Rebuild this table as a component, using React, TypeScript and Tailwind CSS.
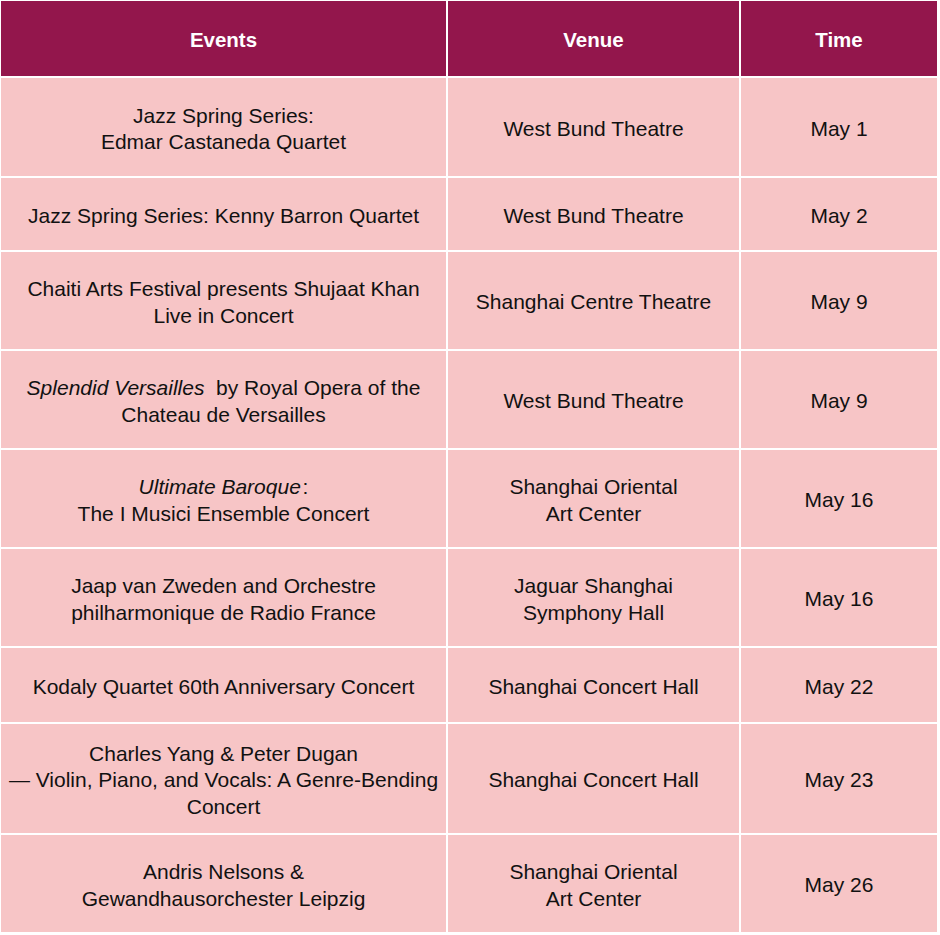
import React from "react";

type Row = { ev: React.ReactNode; venue: React.ReactNode; time: string; h: string };

const rows: Row[] = [
  { ev: <>Jazz Spring Series:<br />Edmar Castaneda Quartet</>, venue: "West Bund Theatre", time: "May 1", h: "h-[98px]" },
  { ev: <>Jazz Spring Series: Kenny Barron Quartet</>, venue: "West Bund Theatre", time: "May 2", h: "h-[72px]" },
  { ev: <>Chaiti Arts Festival presents Shujaat Khan<br />Live in Concert</>, venue: "Shanghai Centre Theatre", time: "May 9", h: "h-[97px]" },
  { ev: <><i>Splendid Versailles</i>&nbsp; by Royal Opera of the<br />Chateau de Versailles</>, venue: "West Bund Theatre", time: "May 9", h: "h-[97px]" },
  { ev: <><i>Ultimate Baroque</i>&#8202;:<br />The I Musici Ensemble Concert</>, venue: <>Shanghai Oriental<br />Art Center</>, time: "May 16", h: "h-[97px]" },
  { ev: <>Jaap van Zweden and Orchestre<br />philharmonique de Radio France</>, venue: <>Jaguar Shanghai<br />Symphony Hall</>, time: "May 16", h: "h-[97px]" },
  { ev: <>Kodaly Quartet 60th Anniversary Concert</>, venue: "Shanghai Concert Hall", time: "May 22", h: "h-[74px]" },
  { ev: <>Charles Yang &amp; Peter Dugan<br />— Violin, Piano, and Vocals: A Genre-Bending<br />Concert</>, venue: "Shanghai Concert Hall", time: "May 23", h: "h-[109px]" },
  { ev: <>Andris Nelsons &amp;<br />Gewandhausorchester Leipzig</>, venue: <>Shanghai Oriental<br />Art Center</>, time: "May 26", h: "h-[97px]" },
];

const cell = "flex items-center justify-center text-center bg-[#f7c5c6] text-[#111111] text-[21px] leading-[26.5px] pt-[4px]";
const head = "flex items-center justify-center text-center bg-[#93164c] text-white font-bold text-[20.5px] h-[75px] pt-[4px]";

export default function App() {
  return (
    <div className="w-[940px] h-[935px] bg-white pt-px pl-px" style={{ fontFamily: '"Liberation Sans", Arial, sans-serif' }}>
      <div className="grid grid-cols-[445px_291px_196px] gap-[2px]">
        <div className={head}>Events</div>
        <div className={head}>Venue</div>
        <div className={head}>Time</div>
        {rows.map((r, i) => (
          <React.Fragment key={i}>
            <div className={`${cell} ${r.h}`}>
              <div>{r.ev}</div>
            </div>
            <div className={`${cell} ${r.h}`}>
              <div>{r.venue}</div>
            </div>
            <div className={`${cell} ${r.h}`}>
              <div>{r.time}</div>
            </div>
          </React.Fragment>
        ))}
      </div>
    </div>
  );
}
